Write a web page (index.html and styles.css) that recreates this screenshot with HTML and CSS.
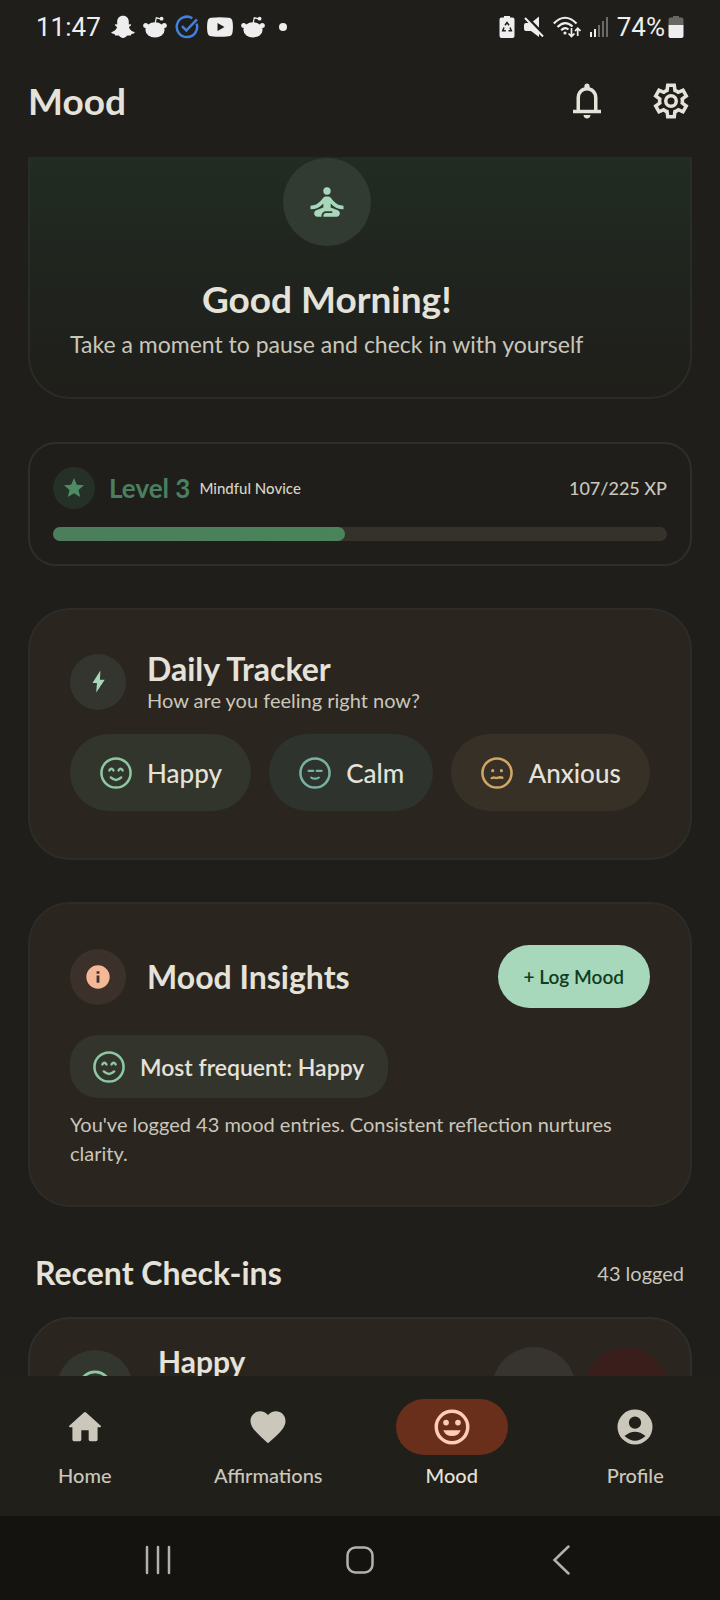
FILE: index.html
```html
<!DOCTYPE html>
<html lang="en">
<head>
  <meta charset="UTF-8" />
  <meta name="viewport" content="width=device-width, initial-scale=1.0"/>
  <title>Mood</title>
  <link rel="stylesheet" href="styles.css">
</head>
<body>

  <!-- Shared icons -->
  <svg class="defs" width="0" height="0" aria-hidden="true">
    <symbol id="face-happy" viewBox="0 0 24 24">
      <circle cx="12" cy="12" r="9.2" stroke-width="1.6"/>
      <path d="M7.8 10.4q1.3-2.2 2.6 0M13.6 10.4q1.3-2.2 2.6 0M8.7 14.8q3.3 3.2 6.6 0" stroke-width="1.5"/>
    </symbol>
    <symbol id="face-calm" viewBox="0 0 24 24">
      <circle cx="12" cy="12" r="9.2" stroke-width="1.6"/>
      <path d="M7.9 10.6h3M13 10.6h3.2M9.6 14.9q2.4 1.4 4.8 0" stroke-width="1.4"/>
    </symbol>
    <symbol id="face-anxious" viewBox="0 0 24 24">
      <circle cx="12" cy="12" r="9.2" stroke-width="1.6"/>
      <path d="M8.7 15.2l1.3-.4 1.4.4 1.300-.3 1.200-.2 1.500.3" stroke-width="1.5"/>
      <path d="M9.3 10.5v.1M14.8 10.500v.1" stroke-width="2"/>
    </symbol>
    <symbol id="reddit" viewBox="0 0 24 22">
      <ellipse cx="12" cy="13.8" rx="9.6" ry="7.6"/>
      <circle cx="2.7" cy="9.6" r="2.5"/>
      <circle cx="21.3" cy="9.6" r="2.5"/>
      <circle cx="18.6" cy="2.7" r="1.9"/>
      <path d="M12.2 7l1.1-5.2 4.6 1" fill="none" stroke="#eee" stroke-width="1.2"/>
    </symbol>
  </svg>

  <div class="status-bar">
    <div class="status-left">
      <span class="clock">11:47</span>
      <svg class="icon-24" viewBox="0 0 24 24"><path d="M12 .8c3.6 0 5.8 2.6 5.8 6v2.6c.7.3 1.6-.5 2.2.2.6.9-1.6 1.6-1.9 2.4-.2 1.4 2.4 4.4 5.4 5.1.6.6-.9 1.6-3 1.9-.4.4-.2 1.3-.8 1.5-1 .2-2.4-.5-3.7.3-1.2.8-2.2 2.2-4 2.2s-2.8-1.4-4-2.2c-1.3-.8-2.7-.1-3.7-.3-.6-.2-.4-1.1-.8-1.5-2.1-.3-3.6-1.3-3-1.9 3-.7 5.6-3.7 5.4-5.1-.3-.8-2.5-1.5-1.9-2.4.6-.7 1.5.1 2.2-.2V6.8c0-3.4 2.2-6 5.8-6z"/></svg>
      <svg class="icon-24" viewBox="0 0 24 22"><use href="#reddit"/></svg>
      <svg class="icon-24 status-check" viewBox="0 0 24 24"><path d="M21.6 8.6A10.2 10.2 0 1 1 17.3 3.2M7 11.2l4.3 4.3L22 4.3"/></svg>
      <svg class="icon-yt" viewBox="0 0 26 20"><path fill-rule="evenodd" d="M4.5.8Q13-.4 21.5.8 25 1 25.5 4.5 26.4 10 25.5 15.5 25 19 21.5 19.2 13 20.4 4.5 19.2 1 19 .5 15.5-.4 10 .5 4.5 1 1 4.5.8zM10.5 6v8l7-4z"/></svg>
      <svg class="icon-24" viewBox="0 0 24 22"><use href="#reddit"/></svg>
      <span class="dot"></span>
    </div>
    <div class="status-right">
      <svg class="icon-batt" viewBox="0 0 16 24"><path d="M5 2.5V1h6v1.5h2.5Q15.5 2.5 15.5 4.5V21q0 2-2 2h-11q-2 0-2-2V4.5q0-2 2-2z"/><path d="M6 10.300l2-2.800 2 2.800M11 12.500l1.300 3.300H9.500M6.800 15.800H3.700L5 12.500" fill="none" stroke="#1f1e1a" stroke-width="1.500"/></svg>
      <svg class="icon-mute" viewBox="0 0 20 22"><path d="M2 7h5l8-6.500V21l-8-6H2q-2 0-2-2V9q0-2 2-2z"/><path d="M2 .5L20 19" stroke="#1f1e1a" stroke-width="3"/><path d="M1 2l18 18.500" stroke="#eee" stroke-width="2"/></svg>
      <svg class="icon-wifi" viewBox="0 0 28 22"><path d="M.8 7.500Q12 -4 23.500 7.500M4.500 11Q12 3.500 19.500 10.500M8.200 14.200Q12 10.500 15.500 13.500" fill="none" stroke="#eee" stroke-width="2.200"/><circle cx="12" cy="17" r="1.600"/><path d="M18.500 12v8M15.500 17.500l3 3 3-3M24.700 20v-7M22 15l2.700-2.700L27.500 15" fill="none" stroke="#eee" stroke-width="1.700"/></svg>
      <svg class="icon-signal" viewBox="0 0 18 20"><path d="M0 15h2v5H0zM4 12h2v8H4z"/><path d="M8 8h2v12H8zM12 4h2v16h-2zM16 0h2v20h-2z" fill="#6b6a67"/></svg>
      <span class="percent">74%</span>
      <svg class="icon-batt" viewBox="0 0 16 24"><path d="M5 2.5V1h6v1.5h2.5Q15.5 2.5 15.5 4.5V10H.5V4.5Q.5 2.5 2.5 2.5z" fill="#686764"/><path d="M.5 10h15v11q0 2-2 2h-11q-2 0-2-2z"/></svg>
    </div>
  </div>

  <header>
    <h1>Mood</h1>
    <div class="header-actions">
      <button class="icon-btn" aria-label="Notifications">
        <svg viewBox="0 0 24 24"><path d="M4 19v-2h2v-7q0-2.075 1.25-3.687T10.5 4.2v-.7q0-.625.438-1.062T12 2t1.063.438T13.5 3.5v.7q2 .5 3.25 2.113T18 10v7h2v2zm8 3q-.825 0-1.412-.587T10 20h4q0 .825-.587 1.413T12 22M8 17h8v-7q0-1.65-1.175-2.825T12 6T9.175 7.175T8 10z"/></svg>
      </button>
      <button class="icon-btn" aria-label="Settings">
        <svg viewBox="0 0 24 24"><path fill-rule="evenodd" d="m9.25 22l-.4-3.2q-.325-.125-.612-.3t-.563-.375L4.7 19.375l-2.75-4.75l2.575-1.95Q4.5 12.5 4.5 12.338v-.675q0-.163.025-.338L1.95 9.375l2.75-4.75l2.975 1.25q.275-.2.575-.375t.6-.3l.4-3.2h5.5l.4 3.2q.325.125.613.3t.562.375l2.975-1.25l2.75 4.75l-2.575 1.95q.025.175.025.338v.674q0 .163-.05.338l2.575 1.95l-2.75 4.75l-2.95-1.25q-.275.2-.575.375t-.6.3l-.4 3.2zM11 20h1.975l.35-2.65q.775-.2 1.438-.587t1.212-.938l2.475 1.025l.975-1.7l-2.15-1.625q.125-.35.175-.737T17.5 12t-.05-.787t-.175-.738l2.15-1.625l-.975-1.7l-2.475 1.05q-.55-.575-1.212-.962t-1.438-.588L13 4h-1.975l-.35 2.65q-.775.2-1.437.588t-1.213.937L5.55 7.15l-.975 1.7l2.15 1.6q-.125.375-.175.75t-.05.8q0 .4.05.775t.175.75l-2.15 1.625l.975 1.7l2.475-1.05q.55.575 1.213.963t1.437.587zM12 8a4 4 0 1 0 0 8a4 4 0 1 0 0-8zM12 10a2 2 0 1 1 0 4a2 2 0 1 1 0-4z"/></svg>
      </button>
    </div>
  </header>

  <main>
    <section class="hero">
      <div class="hero-content">
        <div class="hero-icon">
          <svg viewBox="0 0 24 24"><circle cx="12" cy="6" r="2"/><path d="M21 16v-2c-2.24 0-4.16-.96-5.6-2.68l-1.34-1.6A1.98 1.98 0 0 0 12.53 9h-1.05c-.59 0-1.15.26-1.53.72l-1.34 1.6C7.16 13.04 5.24 14 3 14v2c2.77 0 5.19-1.17 7-3.25V15l-3.88 1.55c-.67.27-1.12.93-1.12 1.66C5 19.2 5.8 20 6.79 20H9v-.5c0-1.38 1.12-2.5 2.5-2.5h3c.28 0 .5.22.5.5s-.22.5-.5.5h-3c-.83 0-1.5.67-1.5 1.5v.5h7.21c.99 0 1.79-.8 1.79-1.79c0-.73-.45-1.39-1.12-1.66L14 15v-2.25c1.81 2.08 4.23 3.25 7 3.25"/></svg>
        </div>
        <h2 class="hero-title">Good Morning!</h2>
        <p class="hero-text">Take a moment to pause and check in with yourself</p>
      </div>
    </section>

    <section class="level-card">
      <div class="level-row">
        <div class="level-icon">
          <svg viewBox="0 0 24 24"><path d="M12 17.27L18.18 21l-1.64-7.03L22 9.24l-7.19-.61L12 2 9.19 8.63 2 9.24l5.46 4.73L5.82 21z"/></svg>
        </div>
        <span class="level-name">Level 3</span>
        <span class="level-rank">Mindful Novice</span>
        <span class="level-xp">107/225 XP</span>
      </div>
      <div class="progress" role="progressbar" aria-label="XP" aria-valuemin="0" aria-valuemax="225" aria-valuenow="107">
        <div class="progress-fill" style="width: calc(100% * 107 / 225)"></div>
      </div>
    </section>

    <section class="card">
      <div class="card-head">
        <div class="card-icon mint">
          <svg viewBox="0 0 24 24"><path d="M13.8 1.5L6.2 13.5h4.3L9.8 22.5 18 10.3h-4.6z"/></svg>
        </div>
        <div>
          <h2>Daily Tracker</h2>
          <p class="card-sub">How are you feeling right now?</p>
        </div>
      </div>
      <div class="moods">
        <button class="mood happy"><svg class="face"><use href="#face-happy"/></svg>Happy</button>
        <button class="mood calm"><svg class="face"><use href="#face-calm"/></svg>Calm</button>
        <button class="mood anxious"><svg class="face"><use href="#face-anxious"/></svg>Anxious</button>
      </div>
    </section>

    <section class="card insights">
      <div class="card-head">
        <div class="card-icon peach">
          <svg viewBox="0 0 24 24"><path fill-rule="evenodd" d="M12 2a10 10 0 1 0 0 20a10 10 0 1 0 0-20zM10.8 7h2.4v2.2h-2.4zM10.8 10.8h2.4V17h-2.4z"/></svg>
        </div>
        <h2>Mood Insights</h2>
        <button class="log-btn">+ Log Mood</button>
      </div>
      <div class="frequent"><svg class="face"><use href="#face-happy"/></svg>Most frequent: Happy</div>
      <p class="insight-text">You've logged 43 mood entries. Consistent reflection nurtures clarity.</p>
    </section>

    <div class="recent-head">
      <h2>Recent Check-ins</h2>
      <span>43 logged</span>
    </div>

    <section class="checkin">
      <div class="checkin-icon"><svg class="face"><use href="#face-happy"/></svg></div>
      <h3>Happy</h3>
      <button class="round-btn" aria-label="Edit"></button>
      <button class="round-btn delete" aria-label="Delete"></button>
    </section>
  </main>

  <nav class="tabs">
    <a class="tab" href="#home">
      <span class="tab-icon"><svg viewBox="0 0 24 24"><path d="M11.4 3.7q.6-.5 1.2 0l8.4 7.6q.5.9-.4.9h-1.4v7q0 .9-.9.9H15q-.9 0-.9-.9v-5.400H9.900v5.400q0 .9-.9.9H5.700q-.9 0-.9-.9v-7H3.400q-.9 0-.4-.9z"/></svg></span>
      Home
    </a>
    <a class="tab" href="#affirmations">
      <span class="tab-icon"><svg viewBox="0 0 24 24"><path d="M12 21.35l-1.45-1.32C5.4 15.36 2 12.28 2 8.5 2 5.42 4.42 3 7.5 3c1.74 0 3.41.81 4.5 2.09C13.09 3.81 14.76 3 16.5 3 19.58 3 22 5.42 22 8.5c0 3.78-3.4 6.86-8.55 11.54z"/></svg></span>
      Affirmations
    </a>
    <a class="tab active" href="#mood">
      <span class="tab-icon"><svg viewBox="0 0 24 24"><path fill-rule="evenodd" d="M12 2a10 10 0 1 0 0 20a10 10 0 1 0 0-20zM12 4a8 8 0 1 1 0 16a8 8 0 1 1 0-16z"/><circle cx="8.600" cy="9.500" r="1.600"/><circle cx="15.400" cy="9.500" r="1.600"/><path d="M7 13.800h10q-1.400 3.400-5 3.400t-5-3.400z"/></svg></span>
      Mood
    </a>
    <a class="tab" href="#profile">
      <span class="tab-icon"><svg viewBox="0 0 24 24"><path fill-rule="evenodd" d="M12 2a10 10 0 1 0 0 20a10 10 0 1 0 0-20zM12 6a3.500 3.500 0 1 1 0 7a3.500 3.500 0 1 1 0-7zM6 17.200q6-5 12 0-6 5.400-12 0z"/></svg></span>
      Profile
    </a>
  </nav>

  <div class="system-nav">
    <button aria-label="Recent apps"><svg viewBox="0 0 30 30"><path d="M4 2v26M15 2v26M26 2v26"/></svg></button>
    <button aria-label="Home screen"><svg viewBox="0 0 30 30"><rect x="2.500" y="2.500" width="25" height="25" rx="8"/></svg></button>
    <button aria-label="Back"><svg viewBox="0 0 30 30"><path d="M21.500 1.500L7.500 15l14 13.500"/></svg></button>
  </div>

</body>
</html>
```

FILE: styles.css
```css
* {
  box-sizing: border-box;
}

body {
  margin: 0;
  height: 100vh;
  display: flex;
  flex-direction: column;
  font-family: Lato, sans-serif;
  background-color: #1f1e1a;
  color: #e5e2d9;
}

h1, h2, h3, p {
  margin: 0;
}

h1 {
  font-size: 37px;
  line-height: 44px;
}

h2 {
  font-size: 32px;
  line-height: 38px;
}

button {
  border: none;
  padding: 0;
  background: none;
  color: inherit;
  font: inherit;
  cursor: pointer;
}

svg {
  flex: none;
  display: block;
  fill: currentColor;
}

.defs {
  position: absolute;
}

/* Status bar */
.status-bar {
  display: flex;
  justify-content: space-between;
  align-items: center;
  flex: none;
  height: 54px;
  padding: 0 36px;
  color: #eee;
  font-family: Roboto, sans-serif;
  font-size: 26px;
}

.status-left,
.status-right {
  display: flex;
  align-items: center;
  gap: 8px;
}

.status-right {
  gap: 9px;
}

.clock {
  margin-right: 2px;
}

.icon-24 {
  width: 24px;
  height: 24px;
}

.status-check {
  fill: none;
  stroke: #3f82e0;
  stroke-width: 2.5;
}

.icon-yt {
  width: 26px;
  height: 20px;
}

.dot {
  width: 8px;
  height: 8px;
  margin-left: 6px;
  border-radius: 50%;
  background: #eee;
}

.icon-batt {
  width: 16px;
  height: 24px;
}

.icon-mute {
  width: 20px;
  height: 22px;
}

.icon-wifi {
  width: 28px;
  height: 22px;
}

.icon-signal {
  width: 18px;
  height: 20px;
}

.percent + .icon-batt {
  margin-left: -6px;
}

/* Header */
header {
  display: flex;
  justify-content: space-between;
  align-items: center;
  flex: none;
  height: 94px;
  padding: 0 28px;
}

.header-actions {
  display: flex;
  gap: 42px;
}

.icon-btn svg {
  width: 42px;
  height: 42px;
}

main {
  flex: 1;
  min-height: 0;
  overflow: hidden;
  margin-top: 9px;
  padding: 0 28px;
}

.hero {
  border: 2px solid #2a2c26;
  border-top: none;
  border-radius: 0 0 42px 42px;
  padding: 1px 40px 38px;
  background: linear-gradient(#212c22, #20241e 50%, #1f1e1a);
}

.hero-content {
  width: fit-content;
  text-align: center;
}

.hero-icon {
  display: flex;
  align-items: center;
  justify-content: center;
  width: 88px;
  height: 88px;
  margin: 0 auto 31px;
  border-radius: 50%;
  background: #313b32;
  color: #a8d8bb;
}

.hero-icon svg {
  width: 44px;
  height: 44px;
}

.hero-title {
  font-size: 37px;
  line-height: 44px;
}

.hero-text {
  margin-top: 8px;
  font-size: 23px;
  line-height: 30px;
  color: #c9c6ba;
}

/* Level */
.level-card {
  margin-top: 43px;
  border: 2px solid #2f2f2a;
  border-radius: 28px;
  padding: 23px;
}

.level-row {
  display: flex;
  align-items: center;
  height: 42px;
}

.level-icon {
  display: flex;
  align-items: center;
  justify-content: center;
  width: 42px;
  height: 42px;
  margin-right: 14px;
  border-radius: 50%;
  background: #253026;
  color: #4f8a66;
}

.level-icon svg {
  width: 24px;
  height: 24px;
}

.level-name {
  margin-right: 9px;
  font-size: 26px;
  font-weight: 700;
  color: #4a8061;
}

.level-rank {
  font-size: 15px;
  font-weight: 500;
  color: #d6d2c7;
}

.level-xp {
  margin-left: auto;
  font-size: 18px;
  font-weight: 500;
  color: #c9c6ba;
}

.progress {
  height: 14px;
  margin-top: 18px;
  border-radius: 7px;
  background: #35322b;
}

.progress-fill {
  height: 14px;
  border-radius: 7px;
  background: linear-gradient(90deg, #4c7d5c, #4a8459);
}

/* Cards */
.card {
  margin-top: 42px;
  border: 2px solid #2d2c26;
  border-radius: 42px;
  padding: 40px 40px 47px;
  background: #2a251f;
}

.card-head {
  display: flex;
  align-items: center;
  min-height: 63px;
}

.card-icon {
  display: flex;
  align-items: center;
  justify-content: center;
  width: 56px;
  height: 56px;
  margin-right: 21px;
  border-radius: 50%;
}

.card-icon.mint {
  background: #34352e;
  color: #a8d8bb;
}

.card-icon.peach {
  background: #3c302a;
  color: #f4b896;
}

.card-icon svg {
  width: 28px;
  height: 28px;
}

.card-icon.mint svg {
  width: 25px;
  height: 25px;
}

.card-sub {
  font-size: 20px;
  line-height: 25px;
  color: #c9c6ba;
}

.moods {
  display: flex;
  gap: 18px;
  margin-top: 21px;
  overflow: hidden;
}

.mood {
  display: flex;
  align-items: center;
  flex: 1 1 auto;
  height: 77px;
  padding: 0 27px;
  border-radius: 39px;
  font-size: 26px;
  font-weight: 500;
}

.face {
  width: 38px;
  height: 38px;
  margin-right: 12px;
  fill: none;
  stroke: #8cc9a3;
  stroke-linecap: round;
}

.mood.happy {
  background: #31352c;
}

.mood.calm {
  background: #2e332e;
}

.mood.calm .face {
  stroke: #78b3a2;
}

.mood.anxious {
  background: #363027;
}

.mood.anxious .face {
  stroke: #d3a564;
}

.insights {
  padding-top: 41px;
  padding-bottom: 29px;
}

.log-btn {
  height: 63px;
  margin-left: auto;
  padding: 0 26px;
  border-radius: 32px;
  background: #a8d8bb;
  color: #0e3d22;
  font-size: 19px;
  font-weight: 600;
}

.frequent {
  display: flex;
  align-items: center;
  width: fit-content;
  height: 63px;
  margin-top: 27px;
  padding: 0 24px 0 20px;
  border-radius: 28px;
  background: #33352d;
  font-size: 23px;
  font-weight: 600;
}

.insight-text {
  margin: 12px 0 8px;
  font-size: 20px;
  line-height: 29px;
  color: #c9c6ba;
}

/* Recent check-ins */
.recent-head {
  display: flex;
  justify-content: space-between;
  align-items: center;
  margin-top: 47px;
  padding: 0 8px 0 7px;
}

.recent-head span {
  font-size: 20px;
  color: #c9c6ba;
}

.checkin {
  display: flex;
  align-items: flex-start;
  margin-top: 25px;
  border: 2px solid #2f2e29;
  border-radius: 42px;
  padding: 28px 22px 28px 27px;
  background: #2a251f;
}

.checkin-icon {
  display: flex;
  align-items: center;
  justify-content: center;
  width: 76px;
  height: 76px;
  margin: 3px 25px 0 0;
  border-radius: 50%;
  background: #32362e;
}

.checkin-icon .face {
  width: 42px;
  height: 42px;
  margin-right: 0;
}

.checkin h3 {
  margin-right: auto;
  font-size: 30px;
  line-height: 28px;
}

.round-btn {
  width: 84px;
  height: 84px;
  margin-left: 8px;
  border-radius: 50%;
  background: #37332e;
}

.round-btn.delete {
  background: #3a1e1c;
}

/* Tab bar */
.tabs {
  display: flex;
  flex: none;
  gap: 14px;
  height: 140px;
  padding-top: 23px;
  background: #201f1a;
}

.tab {
  display: flex;
  flex: 1 1 0;
  flex-direction: column;
  align-items: center;
  gap: 8px;
  color: #cbc7ba;
  font-size: 20px;
  line-height: 24px;
  font-weight: 500;
  text-decoration: none;
}

.tab-icon {
  display: flex;
  align-items: center;
  justify-content: center;
  width: 112px;
  height: 56px;
  border-radius: 28px;
}

.tab-icon svg {
  width: 42px;
  height: 42px;
}

.tab.active {
  color: #e5e2d9;
}

.tab.active .tab-icon {
  background: #6a2f1a;
  color: #ffcdb5;
}

/* System navigation */
.system-nav {
  display: flex;
  flex: none;
  height: 84px;
  padding: 4px 57px 0;
  background: #141310;
}

.system-nav button {
  display: flex;
  flex: 1;
  align-items: center;
  justify-content: center;
}

.system-nav svg {
  width: 30px;
  height: 30px;
  fill: none;
  stroke: #b3b1ac;
  stroke-width: 2.5;
  stroke-linecap: round;
}
```
